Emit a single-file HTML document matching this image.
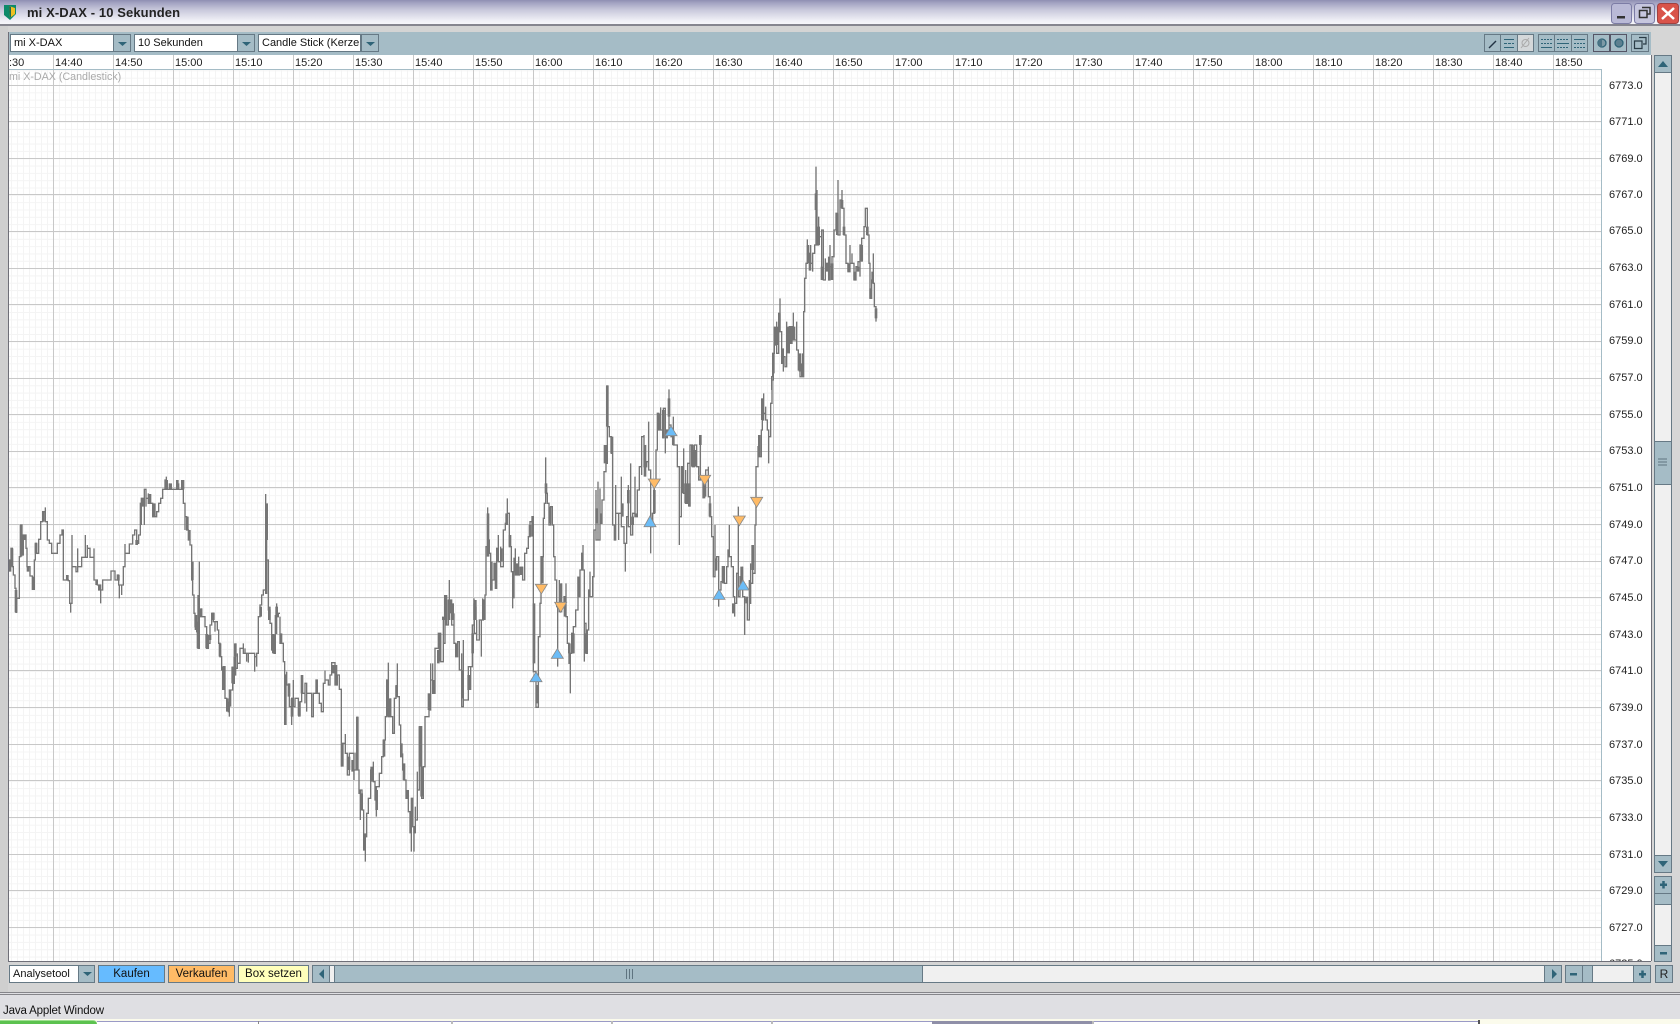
<!DOCTYPE html>
<html><head><meta charset="utf-8"><title>mi X-DAX - 10 Sekunden</title>
<style>
html,body{margin:0;padding:0;width:1680px;height:1024px;overflow:hidden;background:#d4d4d4;font-family:"Liberation Sans",sans-serif}
div{position:absolute;box-sizing:border-box}
.t{background:#a5bcc6;border:1px solid #667985}
.w{background:#fff;border:1px solid #667985;font-size:11px;line-height:17px;padding-left:3px;white-space:nowrap;overflow:hidden;color:#111}
.c{font-size:11.5px;line-height:17px;text-align:center;border:1px solid #667985;color:#111}
</style></head>
<body>
<!-- title bar -->
<div style="left:0;top:0;width:1680px;height:26px;background:linear-gradient(#8f8fb2 0,#a3a3c2 3px,#c9c9dc 10px,#eeeef5 20px,#f6f6fa 24px);border-bottom:2px solid #85858f"></div>
<div style="left:27px;top:4px;font-size:13px;font-weight:bold;line-height:18px;color:#222;letter-spacing:.1px">mi X-DAX - 10 Sekunden</div>
<svg style="position:absolute;left:0;top:0" width="1680" height="26">
<path d="M4 5H16V14L10 20L4 15Z" fill="#0d8a6a"/><path d="M9 6L15 8V14L10 18Z" fill="#f0c020"/><path d="M9 6L11 7L11 17L10 18Z" fill="#1f6a50"/>
<rect x="1611.5" y="3.5" width="20" height="20" rx="3" fill="#b9b9d6" stroke="#7c7ca5"/><rect x="1617" y="16" width="8" height="2.5" fill="#333"/>
<rect x="1634.5" y="3.5" width="20" height="20" rx="3" fill="#c6c6de" stroke="#7c7ca5"/><path d="M1642 7.500H1650V14H1647M1639.500 10.500H1647V17.500H1639.500Z" fill="none" stroke="#333" stroke-width="1.500"/>
<rect x="1657.5" y="3.5" width="21" height="20" rx="3" fill="#d9534a" stroke="#a04040"/><path d="M1662 8L1674 19M1674 8L1662 19" stroke="#fff" stroke-width="2.500"/>
</svg>

<!-- gutter -->
<div style="left:0;top:26px;width:8px;height:966px;background:#cfcfcf"></div>
<div style="left:1651px;top:26px;width:29px;height:966px;background:#d6d6d6"></div>

<!-- toolbar -->
<div style="left:8px;top:32px;width:1643px;height:23px;background:#a5bcc6"></div>
<div class="w" style="left:10px;top:34px;width:104px;height:18px">mi X-DAX</div>
<div class="w" style="left:134px;top:34px;width:104px;height:18px">10 Sekunden</div>
<div class="w" style="left:258px;top:34px;width:103px;height:18px">Candle Stick (Kerzen</div>
<div class="t" style="left:113px;top:34px;width:18px;height:18px"></div>
<div class="t" style="left:237px;top:34px;width:18px;height:18px"></div>
<div class="t" style="left:361px;top:34px;width:18px;height:18px"></div>
<svg style="position:absolute;left:0;top:30px" width="1680" height="26">
<path fill="#2f6478" d="M118 12H127L122.500 16Z M242 12H251L246.500 16Z M366 12H375L370.500 16Z"/>
<g fill="#a5bcc6" stroke="#667985">
<rect x="1484.500" y="4.500" width="16" height="17"/><rect x="1500.500" y="4.500" width="17" height="17"/><rect x="1517.500" y="4.500" width="16" height="17" fill="#d4d8da"/>
<rect x="1538.500" y="4.500" width="16" height="17"/><rect x="1554.500" y="4.500" width="17" height="17"/><rect x="1571.500" y="4.500" width="16" height="17"/>
<rect x="1593.500" y="4.500" width="16" height="17" stroke="#556"/><rect x="1610.500" y="4.500" width="16" height="17" stroke="#556"/>
<rect x="1631.500" y="4.500" width="17" height="17"/>
</g>
<path d="M1489 18L1496 11" stroke="#234" stroke-width="1.400"/>
<path d="M1504 9.500H1514M1504 17.500H1514" stroke="#2f6478" fill="none"/><path d="M1504 13.500H1514" stroke="#2f6478" fill="none" stroke-dasharray="3 1"/>
<path d="M1521 18L1529 8M1522 13a3.500 3.500 0 1 0 7 0a3.500 3.500 0 1 0 -7 0" stroke="#aaa" fill="none"/>
<path d="M1541 9.500H1552M1541 13.500H1552" stroke="#2f6478" stroke-dasharray="2 1"/><path d="M1541 17.500H1552M1557 13.500H1569" stroke="#2f6478"/><path d="M1557 9.500H1569M1557 17.500H1569M1574 13.500H1585M1574 17.500H1585" stroke="#2f6478" stroke-dasharray="2 1"/><path d="M1574 9.500H1585" stroke="#2f6478"/>
<circle cx="1602" cy="13" r="4" fill="#7d9aa6" stroke="#2f6478" stroke-width="1.300"/><path d="M1602 9a4 4 0 0 0 0 8z" fill="#4b7486"/>
<circle cx="1619" cy="13" r="4" fill="#5d8090" stroke="#2f6478" stroke-width="1.300"/>
<path d="M1639 7.500H1646V14H1643M1634.500 11H1642V18.500H1634.500Z" fill="none" stroke="#2a3c46" stroke-width="1.200"/>
</svg>

<!-- chart -->
<svg style="position:absolute;left:0;top:0" width="1680" height="1024" font-family="Liberation Sans, sans-serif">
<defs>
<pattern id="mn" patternUnits="userSpaceOnUse" x="5" y="85" width="6" height="7.324"><path d="M.5 0V8M0 .5H6" stroke="#f4f4f4" fill="none"/></pattern>
<clipPath id="cc"><rect x="9" y="70" width="1592" height="891"/></clipPath>
<clipPath id="pc"><rect x="1602" y="55" width="49" height="906"/></clipPath>
</defs>
<rect x="8" y="55" width="1643" height="906" fill="#fff"/>
<rect x="9" y="70" width="1592" height="891" fill="url(#mn)"/>
<path shape-rendering="crispEdges" stroke="#c8c8c8" fill="none" d="M9 85.500H1601M9 121.500H1601M9 158.500H1601M9 194.500H1601M9 231.500H1601M9 268.500H1601M9 304.500H1601M9 341.500H1601M9 378.500H1601M9 414.500H1601M9 451.500H1601M9 487.500H1601M9 524.500H1601M9 561.500H1601M9 597.500H1601M9 634.500H1601M9 670.500H1601M9 707.500H1601M9 744.500H1601M9 780.500H1601M9 817.500H1601M9 854.500H1601M9 890.500H1601M9 927.500H1601
M53.500 55V961M113.500 55V961M173.500 55V961M233.500 55V961M293.500 55V961M353.500 55V961M413.500 55V961M473.500 55V961M533.500 55V961M593.500 55V961M653.500 55V961M713.500 55V961M773.500 55V961M833.500 55V961M893.500 55V961M953.500 55V961M1013.500 55V961M1073.500 55V961M1133.500 55V961M1193.500 55V961M1253.500 55V961M1313.500 55V961M1373.500 55V961M1433.500 55V961M1493.500 55V961M1553.500 55V961"/>
<path shape-rendering="crispEdges" stroke="#a5bcc6" fill="none" d="M8 69.500H1601.500V961"/>
<path shape-rendering="crispEdges" stroke="#6f6f78" fill="none" d="M8.500 32V961.500H1651M1651.500 55V961"/>

<g font-size="11" fill="#222">
<text x="9" y="66">:30</text><text x="55" y="66">14:40</text><text x="115" y="66">14:50</text><text x="175" y="66">15:00</text><text x="235" y="66">15:10</text><text x="295" y="66">15:20</text><text x="355" y="66">15:30</text><text x="415" y="66">15:40</text><text x="475" y="66">15:50</text><text x="535" y="66">16:00</text><text x="595" y="66">16:10</text><text x="655" y="66">16:20</text><text x="715" y="66">16:30</text><text x="775" y="66">16:40</text><text x="835" y="66">16:50</text><text x="895" y="66">17:00</text><text x="955" y="66">17:10</text><text x="1015" y="66">17:20</text><text x="1075" y="66">17:30</text><text x="1135" y="66">17:40</text><text x="1195" y="66">17:50</text><text x="1255" y="66">18:00</text><text x="1315" y="66">18:10</text><text x="1375" y="66">18:20</text><text x="1435" y="66">18:30</text><text x="1495" y="66">18:40</text><text x="1555" y="66">18:50</text>
</g>
<text x="9" y="80" font-size="10.700" fill="#aaa">mi X-DAX (Candlestick)</text>
<g font-size="11" fill="#222" clip-path="url(#pc)">
<text x="1609" y="89">6773.0</text><text x="1609" y="125">6771.0</text><text x="1609" y="162">6769.0</text><text x="1609" y="198">6767.0</text><text x="1609" y="234">6765.0</text><text x="1609" y="271">6763.0</text><text x="1609" y="308">6761.0</text><text x="1609" y="344">6759.0</text><text x="1609" y="381">6757.0</text><text x="1609" y="418">6755.0</text><text x="1609" y="454">6753.0</text><text x="1609" y="491">6751.0</text><text x="1609" y="528">6749.0</text><text x="1609" y="564">6747.0</text><text x="1609" y="601">6745.0</text><text x="1609" y="638">6743.0</text><text x="1609" y="674">6741.0</text><text x="1609" y="711">6739.0</text><text x="1609" y="748">6737.0</text><text x="1609" y="784">6735.0</text><text x="1609" y="821">6733.0</text><text x="1609" y="858">6731.0</text><text x="1609" y="894">6729.0</text><text x="1609" y="931">6727.0</text><text x="1609" y="967">6725.0</text>
</g>

<g clip-path="url(#cc)" fill="none" stroke="#757575">
<!-- section 1 -->
<g transform="translate(0,460) scale(.33333)">
<path stroke-width="4" d="M27 335V300H33V265H37V320H40V345H45V385H48V457H50V415H58V290H62V195H66V285H70V225H78V265H81V320H90V348H97V388H103V300H106V250H110V280H116V238H122V185H128V155H136V142V185H142V240H148V250H155V280H172V250H180V225H186V210H190V360H205V362H209V430H212V458V430H216V225V320H228V335H233V265V320H245V292H256V225V292H262V255V265H270V292H282V265V360H292V375H302V430V390H308V360H333V333H345V360H352V345H356V375H358V415V375H365V405V375H370V320H375V252V280H388V252H398V225H404V210H410V250H416V225H421V130H424V195V115H433V195V88H438V140V115H445V100V130H458V170H470V155H476V130H482V115H488V88H495V60H499V50V88H508V70V88H520H530V60V88H536V70V88H545V60V88H550V130H555V210V170H560V210H565V240H570V255H575V360H578V405H582V460H585V500H590V515H594V405V565H598V305V470H605V445V470H610H615V500H620V565H625V525V550H630V495H635V460H640V485H645V515V485H652V510H656V550H660V590H665V630H670V690V620H675V715H680V745H685V725V755H688V770V690H692V740V690H698V620V670H703V590V645H707V550V625H712V580V610H720V565H730V550V580H735V565V580H740V605V580H745V608V580H764V635V590H770V620V580H775V470H780V435H785V405H790V390H797V102V400H800V230V300H805V450H810V490H815V520V570H822V525V580H826V465V520H830V430V470H835V460H840"/>
<path stroke-width="8" d="M30 300V335M36 265V320M48 390V457M63 195V290M74 225V240M84 320V335M100 350V388M108 250V280M130 155V185M202 345V362M290 362V375M298 375V392M355 345V362M410 240V255M430 115V140M450 102V130M463 130V170M500 60V88M512 70V88M532 60V88M549 60V88M562 170V210M568 210V240M577 305V360M588 465V510M594 485V565M603 445V470M620 522V565M630 525V540M640 458V480M660 550V590M670 620V690M682 715V755M698 620V670M706 550V590M782 440V470M800 130V240M808 440V480M820 522V580M830 440V470"/>
</g>
<!-- section 2 -->
<g transform="translate(280,600) scale(.33333)">
<path stroke-width="4" d="M0 50V130H10V185H14V375V225H20V215V255H28V320H35V375V295H40V240V320H45V295H55V345H60V305H65V225V280H75V310V250H80V335V280H85H95V350H100V280H108V240H112V280H118V310H124V335H130V250H135V212V240H145V255H150V225H155V188H165V255H172V225H178V268H184V500V430H190H196V402V460H202V525H208V460H222V540V510H228V460H232V350V510H237V515V580H241V660V570H246V630H251V750H256V785V710H260V640H265V595H272V510H280V485V545H285V600H289V650V560H293H298V520H305V470H310V420H316V400V350H320V240H325V188V350H332V295V350H338V400H343V295H348V260H352V190V290H358V375H362V470H368V460V510H372V540H378V595H385V570V635H390V640H394V755V595H398V680H402V755V680H406V620V660H412V515V570H418V560V380H425V500V595H430V500H435V460V350H440H447V280V330H452V190V240H458V190V280H465V240V145H475V100H482V150V185H490V50V130H495V0V75H505V0H510H515V75H522V40V130H527V170H533V125H538V210H545V160V320H550V120V300H565V200H572V270V200H577V75H583V0V100H590V60V120H598V60H604V170V60H610V0H615"/>
<path stroke-width="8" d="M3 100V130M16 225V375M27 250V290M36 295V350M58 305V350M66 225V280M160 195V220M168 195V255M187 430V500M207 470V510M218 480V515M232 350V510M245 580V630M254 700V750M275 500V545M290 570V630M312 420V470M322 240V350M330 295V350M350 255V290M364 430V470M372 490V540M382 570V595M392 640V700M404 680V700M420 380V500M425 500V590M447 280V330M462 240V280M475 150V190M480 100V185M498 0V75M512 0V30M530 130V170M548 210V295M566 225V270M578 100V160M586 0V60M612 0V50"/>
</g>
<!-- section 3 -->
<g transform="translate(430,480) scale(.33333)">
<path stroke-width="4" d="M38 420V410M44 420V345M50 420V345M58 420V300M64 420V370M70 420V370M132 420V355M138 420V380M158 420V355M165 420V345H168V200H173V82V180H178V220H182V330H186V245V300H192V250H196V325H200V205H205V165V245H212V200V260H220V150H226V130H232V55V100H238V200H244V275H248V385V275H252V235H256V205V285H266V230V285H270"/>
<path stroke-width="8" d="M46 345V420M60 370V400M68 370V420M134 370V420M160 370V420M174 100V230M202 205V245M214 205V245M230 100V135M240 165V200M250 275V355M260 250V285M272 260V285"/>
</g>
<!-- section 4 -->
<g transform="translate(520,370) scale(.33333)">
<path stroke-width="4" d="M0 605H8V590V630H14V550H20V535H25V500H30V455H36V500V440H40V645V905H45H48V1010V1012H55V800H60V700H63V650V560H70V445H73V400H77V262V370H82V400H87V465H92V410H97V465H101V560H105V630H110V710H113V890V710H118V630V725H125V640V700H132V680H138V640V740H142V820H147V880H151V970V850H155V790H160V850V770H167V720H174V620V680H180V600H185V550H189V525V600H193V875V760H198V850H202V780H206V660H210V605V680H218V620H222V480H228V360V510H234V335V510H240V355V460H246V390H252V305H258V225V280H262V46V170H268V200H274V250H278V200V465H283V510H287V345V430H296V510V430H304V320V470H312V520H316V605V520H320V440H325V345V470H332V280V495H338V430H345V320V440H352V410V360H358V290H365V315V200H372V195V290H380V275H386V155V300H392V550V470H397V430H403V360V335H408V240H412V130H416V180H422V112V180H430V205V115H436V250V180H447V58V165H453V200H460V140V225H467H472V290H478V525V440H484V290H491V235V370H497V300V400H503V280H510V410V225H517V290H523V225H530V290H536V330H541V195V320H549V385V325H557V380V300H565V290V380H570V440H575V500H580V570V620H585V465V600H590V560H596V710V660H603V635H607V590H613V640H620V590H624V540H628V465V560H634V590H640V680H644V740V700H650V610H655V410V680H660V620H668V590V680H674V795V690H682V750H688V630V700H692V580V640H698V525V610H705V465H708V290H714V230H718V195V260H724V180H727V85V150H731V70V130H737V110V150H742V180H746V280V200H752V100H756V30H760V0"/>
<path stroke-width="8" d="M5 590V605M30 465V500M42 700V880M52 945V1000M67 560V640M78 340V370M90 410V460M122 640V700M135 680V740M148 820V850M160 790V850M176 620V680M198 790V850M230 415V460M243 430V460M262 46V170M255 225V280M275 200V250M307 400V440M325 360V400M338 440V465M347 430V440M375 225V320M403 360V430M417 130V180M430 120V205M440 180V205M447 85V140M460 190V225M488 290V370M497 340V400M508 340V410M517 225V290M525 240V290M541 195V225M552 340V385M570 400V440M588 565V600M610 590V640M640 700V730M665 590V640M680 680V700M698 525V600M718 195V260M727 85V150"/>
<g stroke="#8a8a8a" stroke-width="2.500" stroke-linejoin="miter">
<path fill="#6bbcf7" d="M48 906L30 935H66Z M112 836L94 865H130Z M390 438L372 470H408Z M453 168L435 197H471Z M597 658L579 688H615Z M669 630L651 660H687Z"/>
<path fill="#ffbb66" d="M46 643H82L64 672Z M104 697H140L122 727Z M385 327H421L403 356Z M536 316H572L554 346Z M640 438H676L658 467Z M692 382H728L710 412Z"/>
</g>
</g>
<!-- section 5 -->
<g transform="translate(720,150) scale(.33333)">
<path stroke-width="4" d="M155 720V680H158V610H163V530V585H170V515V610H176V490H180V445V545H185V590V640H190V665V620H195V650H200V515V590H208V610V530H212V580H216V530H220V488V570H230V515V600H235V660H240V680H248V610V680H251V485H254V420V385H258V340H262V268V310H268V360H272V285V340H278V365V310H284V285H288V130V50V180H291V120V285H296V200V260H300H305V390V240H310V285V390H316V325V360H320V340H326V320V390H330V285V350H336V390V320H342V240H348V230V190H354V90V255H360V205V150H366V120V175H372V230V255H378V340H384V365H390V285V340H396V310V340H402V390H408V360V350H414V335H420V380V285H425V335V265H432V230H436V175H442V255H447V340H450V445H455V390H460V310V400H463V470H468V515V500"/>
<path stroke-width="8" d="M160 610V670M166 530V585M172 530V585M178 490V545M188 595V640M204 530V610M222 530V570M240 610V665M247 640V680M264 285V340M270 310V340M288 130V180M296 230V285M306 350V390M322 340V365M336 340V390M352 190V255M366 150V175M372 230V255M386 340V365M404 365V390M414 350V365M425 285V335M442 230V255M452 415V445M458 365V400M468 475V505"/>
</g>
</g>
</svg>

<!-- vertical scrollbar -->
<div style="left:1654px;top:72px;width:18px;height:783px;background:#f0f0f0;border-left:1px solid #667985;border-right:1px solid #667985"></div>
<div class="t" style="left:1654px;top:55px;width:18px;height:18px"></div>
<div class="t" style="left:1654px;top:441px;width:18px;height:44px"></div>
<div class="t" style="left:1654px;top:855px;width:18px;height:18px"></div>
<div style="left:1654px;top:893px;width:18px;height:52px;background:#f0f0f0;border-left:1px solid #667985;border-right:1px solid #667985"></div>
<div class="t" style="left:1654px;top:876px;width:18px;height:18px"></div>
<div class="t" style="left:1654px;top:893px;width:18px;height:12px"></div>
<div class="t" style="left:1654px;top:945px;width:18px;height:17px"></div>

<!-- bottom row -->
<div class="w" style="left:9px;top:965px;width:70px;height:18px;padding-left:3px">Analysetool</div>
<div class="t" style="left:78px;top:965px;width:17px;height:18px"></div>
<div class="c" style="left:98px;top:965px;width:67px;height:18px;background:#66bbff">Kaufen</div>
<div class="c" style="left:168px;top:965px;width:67px;height:18px;background:#ffbb66">Verkaufen</div>
<div class="c" style="left:238px;top:965px;width:71px;height:18px;background:#ffffbb">Box setzen</div>
<div style="left:312px;top:965px;width:1233px;height:18px;background:#f0f0f0;border:1px solid #667985"></div>
<div class="t" style="left:312px;top:965px;width:18px;height:18px"></div>
<div class="t" style="left:334px;top:965px;width:589px;height:18px"></div>
<div class="t" style="left:1544px;top:965px;width:18px;height:18px"></div>
<div style="left:1565px;top:965px;width:86px;height:18px;background:#f0f0f0;border:1px solid #667985"></div>
<div class="t" style="left:1565px;top:965px;width:18px;height:18px"></div>
<div class="t" style="left:1582px;top:965px;width:11px;height:18px"></div>
<div class="t" style="left:1633px;top:965px;width:18px;height:18px"></div>
<div class="t" style="left:1655px;top:965px;width:18px;height:18px;font-size:12px;line-height:16px;text-align:center;color:#222">R</div>

<svg style="position:absolute;left:0;top:0;pointer-events:none" width="1680" height="1024">
<g fill="#2f6478" stroke="none">
<path d="M1658 67L1663 61L1668 67Z M1658 861H1668L1663 867Z"/>
<rect x="1660" y="883.500" width="7" height="2.500"/><rect x="1662.250" y="881" width="2.500" height="7.500"/>
<rect x="1660" y="952" width="7" height="2.500"/>
<path d="M83 972H92L87.500 976Z"/>
<path d="M324 969V979L319 974Z M1552 969V979L1557 974Z"/>
<rect x="1570" y="973" width="7" height="2.500"/>
<rect x="1639" y="973" width="7" height="2.500"/><rect x="1641.250" y="970.500" width="2.500" height="7.500"/>
</g>
<path d="M626.500 969V979M629.500 969V979M632.500 969V979" stroke="#5f7480"/>
<path d="M1658 459H1667M1658 462H1667M1658 465H1667" stroke="#5f7480"/>
</svg>

<!-- status -->
<div style="left:0;top:992px;width:1680px;height:28px;background:#dfdfe3;border-top:3px double #85858a"></div>
<div style="left:3px;top:1004px;font-size:11.5px;line-height:15px;color:#111;letter-spacing:-.15px">Java Applet Window</div>

<!-- taskbar sliver -->
<div style="left:0;top:1019px;width:1680px;height:5px;background:#fbfbec"></div>
<div style="left:97px;top:1021px;width:1382px;height:3px;background:#fff;border-top:1px solid #9a9ac6"></div>
<div style="left:0;top:1020px;width:97px;height:4px;background:#5cc24f;border-top:1px solid #9fe090;border-radius:0 4px 0 0"></div>
<div style="left:258px;top:1021px;width:1px;height:3px;background:#888"></div>
<div style="left:451px;top:1021px;width:2px;height:3px;background:#bbb"></div>
<div style="left:611px;top:1021px;width:2px;height:3px;background:#bbb"></div>
<div style="left:771px;top:1021px;width:2px;height:3px;background:#bbb"></div>
<div style="left:932px;top:1021px;width:160px;height:3px;background:#8f8fa8"></div>
<div style="left:1092px;top:1021px;width:2px;height:3px;background:#bbb"></div>
<div style="left:1478px;top:1020px;width:2px;height:4px;background:#555"></div>
</body></html>
